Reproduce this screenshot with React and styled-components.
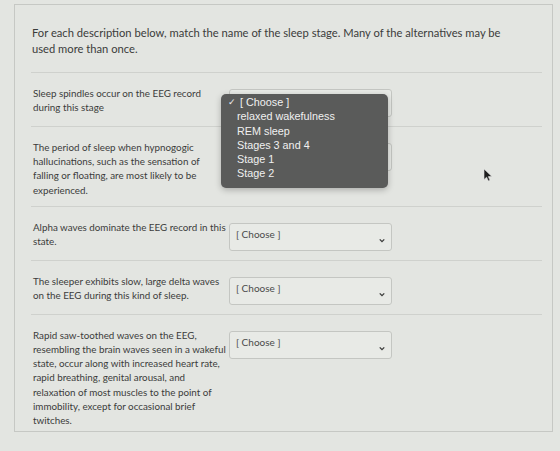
import React from "react";
import styled, { createGlobalStyle } from "styled-components";

const questions = [
  ["Sleep spindles occur on the EEG record", "during this stage"],
  [
    "The period of sleep when hypnogogic",
    "hallucinations, such as the sensation of",
    "falling or floating, are most likely to be",
    "experienced.",
  ],
  ["Alpha waves dominate the EEG record in this", "state."],
  ["The sleeper exhibits slow, large delta waves", "on the EEG during this kind of sleep."],
  [
    "Rapid saw-toothed waves on the EEG,",
    "resembling the brain waves seen in a wakeful",
    "state, occur along with increased heart rate,",
    "rapid breathing, genital arousal, and",
    "relaxation of most muscles to the point of",
    "immobility, except for occasional brief",
    "twitches.",
  ],
];

const options = [
  "[ Choose ]",
  "relaxed wakefulness",
  "REM sleep",
  "Stages 3 and 4",
  "Stage 1",
  "Stage 2",
];

export default function App() {
  return (
    <>
      <GlobalStyle />
      <Page>
        <Card>
          <Intro>
            For each description below, match the name of the sleep stage. Many of the
            alternatives may be used more than once.
          </Intro>
          {questions.map((lines, index) => (
            <Row key={index} last={index === questions.length - 1}>
              <Question>
                {lines.map((l) => (
                  <Line key={l}>{l}</Line>
                ))}
              </Question>
              <Select>
                <span>{index < 2 ? "" : "[ Choose ]"}</span>
                <Chevron viewBox="0 0 8 6">
                  <path d="M1 1.5 L4 4.5 L7 1.5" />
                </Chevron>
              </Select>
            </Row>
          ))}
        </Card>
        <Menu>
          {options.map((o, index) => (
            <MenuItem key={o} first={index === 0}>
              {index === 0 && <Check>✓</Check>}
              {o}
            </MenuItem>
          ))}
        </Menu>
        <Cursor viewBox="0 0 10 14">
          <path d="M1 1 L1 11.5 L3.6 9.2 L5.4 13 L7 12.3 L5.3 8.6 L8.8 8.4 Z" />
        </Cursor>
      </Page>
    </>
  );
}

const GlobalStyle = createGlobalStyle`
  body {
    margin: 0;
    background: #e3e5e1;
    font-family: Lato, "Open Sans", sans-serif;
    color: #3b3c3b;
  }
`;

const Page = styled.div`
  position: relative;
  width: 560px;
  height: 451px;
  padding: 4px 7px 0 14px;
  box-sizing: border-box;
  overflow: hidden;
`;

const Card = styled.div`
  height: 428px;
  border: 1px solid #c6c8c4;
  box-sizing: border-box;
  padding: 0 10px 0 16px;
`;

const Intro = styled.p`
  margin: 0;
  padding: 20px 40px 15px 1px;
  font-size: 11.2px;
  line-height: 16px;
  border-bottom: 1px solid #cfd1cd;
`;

const Row = styled.div`
  display: flex;
  align-items: flex-start;
  padding: 13px 0 ${(p) => (p.last ? "0" : "9px")};
  border-bottom: ${(p) => (p.last ? "none" : "1px solid #cfd1cd")};
`;

const Question = styled.div`
  width: 198px;
  font-size: 9.8px;
  line-height: 14.2px;
  padding-left: 2px;
  box-sizing: border-box;
`;

const Line = styled.div`
  white-space: nowrap;
`;

const Select = styled.div`
  position: relative;
  width: 163px;
  height: 28px;
  margin-top: 3px;
  box-sizing: border-box;
  border: 1px solid #c4c6c2;
  border-radius: 3px;
  background: #e8eae6;
  padding: 4px 6px;
  font-size: 10px;
  color: #4a4b4a;
`;

const Chevron = styled.svg`
  position: absolute;
  right: 6px;
  top: 14px;
  width: 6px;
  height: 5px;
  fill: none;
  stroke: #3c3d3c;
  stroke-width: 1.8;
`;

const Menu = styled.div`
  position: absolute;
  left: 221px;
  top: 94px;
  width: 167px;
  height: 94px;
  box-sizing: border-box;
  padding: 1px 0 0 16px;
  background: #5a5b5a;
  border-radius: 5px;
  box-shadow: 0 2px 6px rgba(0, 0, 0, 0.25);
  font-family: "Liberation Sans", Arial, sans-serif;
  font-size: 10.8px;
  color: #f0f0f0;
`;

const MenuItem = styled.div`
  position: relative;
  line-height: 14.3px;
  padding-left: ${(p) => (p.first ? "3px" : "0")};
`;

const Check = styled.span`
  position: absolute;
  left: -9px;
  top: 0;
  font-size: 9px;
`;

const Cursor = styled.svg`
  position: absolute;
  left: 483px;
  top: 168px;
  width: 10px;
  height: 14px;
  fill: #1e1f1e;
  stroke: #e0e0e0;
  stroke-width: 0.6;
`;
